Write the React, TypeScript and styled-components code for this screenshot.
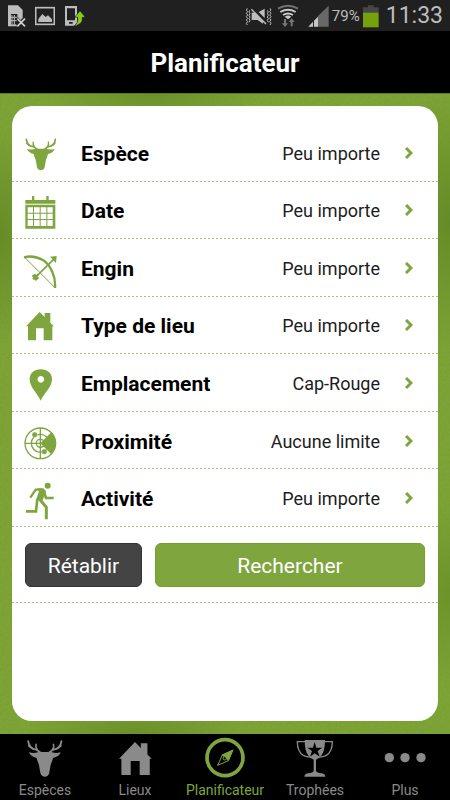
import React from "react";
import styled, { createGlobalStyle } from "styled-components";

const GREEN = "#7fa53f";
const GREY = "#8a8a8a";

const GlobalStyle = createGlobalStyle`
  *, *::before, *::after { box-sizing: border-box; }
  body { margin: 0; background: #000; font-family: Roboto, sans-serif; }
  button { font: inherit; cursor: pointer; }
`;

const Screen = styled.div`
  display: flex;
  flex-direction: column;
  min-height: 100vh;
`;

const StatusBar = styled.div`
  display: flex;
  align-items: center;
  justify-content: space-between;
  height: 31px;
  padding: 0 7px 0 6px;
  background: #202020;
  color: #bdbdbd;
`;

const StatusGroup = styled.div<{ $gap: number }>`
  display: flex;
  align-items: center;
  gap: ${(p) => p.$gap}px;
`;

const Percent = styled.span`
  font-size: 15px;
  line-height: 30px;
`;

const Clock = styled.time`
  padding-left: 4px;
  font-size: 23px;
  line-height: 30px;
`;

const Header = styled.header`
  display: flex;
  align-items: center;
  justify-content: center;
  height: 62px;
  padding-top: 2px;
  background: #000;
`;

const Title = styled.h1`
  margin: 0;
  color: #fff;
  font-size: 26px;
  font-weight: 700;
  line-height: 32px;
`;

const Main = styled.main`
  position: relative;
  display: flex;
  flex: 1;
  padding: 12px 12px 13px;
  border-top: 1px solid #587a25;
  background:
    radial-gradient(ellipse 110px 40px at 30% 100%, #68902f, transparent),
    radial-gradient(ellipse 110px 30px at 34% 0%, #68902f, transparent),
    radial-gradient(ellipse 60px 110px at 0% 22%, #628b2b, transparent),
    radial-gradient(ellipse 60px 130px at 100% 20%, #628b2b, transparent),
    radial-gradient(ellipse 60px 90px at 100% 78%, #6a9330, transparent),
    #7ca43c;
`;

const Texture = styled.svg`
  position: absolute;
  inset: 0;
  width: 100%;
  height: 100%;
  opacity: 0.2;
`;

const Card = styled.form`
  position: relative;
  flex: 1;
  padding-top: 18px;
  border-radius: 20px;
  background: #fff;
`;

const Rows = styled.div`
  display: grid;
  grid-auto-rows: 1fr;
  min-height: 403px;
`;

const dotted = `
  background-image: linear-gradient(90deg, #a9c383 50%, transparent 50%);
  background-size: 4px 1px;
  background-position: left bottom;
  background-repeat: repeat-x;
`;

const Row = styled.button.attrs({ type: "button" })`
  display: flex;
  align-items: center;
  width: 100%;
  padding: 0 25px 0 8px;
  border: 0;
  background-color: transparent;
  ${dotted}
  color: #000;
  text-align: left;
`;

const RowIcon = styled.svg`
  flex: none;
  width: 42px;
  height: 42px;
  color: ${GREEN};
`;

const RowLabel = styled.span`
  flex: 1;
  padding: 2px 0 0 19px;
  font-size: 21px;
  font-weight: 700;
  line-height: 26px;
`;

const RowValue = styled.span`
  padding: 2px 25px 0 0;
  color: #1c1c1c;
  font-size: 18px;
  line-height: 26px;
`;

const Chevron = styled.svg`
  flex: none;
  width: 8px;
  height: 12px;
  color: ${GREEN};
`;

const Actions = styled.div`
  display: flex;
  gap: 13px;
  padding: 16px 13px 16px;
  ${dotted}
`;

const ActionButton = styled.button<{ $primary?: boolean }>`
  flex: ${(p) => (p.$primary ? "7 1 0" : "3 1 0")};
  height: 44px;
  padding: 2px 0 0;
  border: 1px solid ${(p) => (p.$primary ? "#76a02c" : "#333")};
  border-radius: 6px;
  background: ${(p) => (p.$primary ? GREEN : "#444")};
  color: #fff;
  font-size: 21px;
`;

const TabBar = styled.nav`
  display: grid;
  grid-template-columns: repeat(5, 1fr);
  height: 66px;
  background: #000;
`;

const Tab = styled.a<{ $active?: boolean }>`
  display: flex;
  flex-direction: column;
  align-items: center;
  padding-top: 3px;
  color: ${(p) => (p.$active ? GREEN : GREY)};
  font-size: 14px;
  line-height: 18px;
  text-decoration: none;
`;

const TabIcon = styled.svg`
  width: 42px;
  height: 42px;
  margin-bottom: 2px;
`;

const Deer = () => (
  <g fill="currentColor">
    <path d="M82 88 Q99 92 110 86 Q123 89 137 86 Q149 92 165 88 Q162 99 145 103 Q143 112 139 120 L135 143 Q132 152 124 152 Q115 152 112 143 L108 120 Q104 112 102 103 Q86 99 82 88Z" />
    <g fill="none" stroke="currentColor" strokeLinecap="round">
      <path strokeWidth="5" d="M80 59 Q82 74 93 79 Q106 81 111 89 M167 59 Q165 74 154 79 Q141 81 136 89" />
      <path strokeWidth="4" d="M81 71 Q86 77 93 79 M101 67 Q98 75 104 82 M146 67 Q149 75 143 82 M166 71 Q161 77 154 79" />
    </g>
  </g>
);

const House = () => (
  <path
    fill="currentColor"
    d="M79 262 L120 219 L135 234 V222 H152 V251 L163 262 H158 V304 H132 V268 H109 V304 H85 V262Z"
  />
);

const CalendarIcon = () => (
  <g fill="currentColor">
    <path d="M77 242 H97 V230 H104 V242 H140 V230 H147 V242 H167 V253 H77Z" />
    <path
      fillRule="evenodd"
      d="M77 256 H167 V328 H77Z M84 264 V280 H100 V264Z M103 264 V280 H120 V264Z M123 264 V280 H140 V264Z M143 264 V280 H159 V264Z M84 283 V299 H100 V283Z M103 283 V299 H120 V283Z M123 283 V299 H140 V283Z M143 283 V299 H159 V283Z M84 302 V320 H100 V302Z M103 302 V320 H120 V302Z M123 302 V320 H140 V302Z M143 302 V320 H159 V302Z"
    />
  </g>
);

const Bow = () => (
  <g fill="none" stroke="currentColor">
    <path strokeWidth="3" d="M75 53 L165 143" />
    <path strokeWidth="7" d="M73 53 Q102 45 131 62 Q147 72 158 97 Q168 119 166 145" />
    <path strokeWidth="5" d="M101 119 L162 59" />
    <path fill="currentColor" stroke="none" d="M151 51 L171 49 L169 70Z M96 108 L106 102 L110 106 L113 102 L117 106 L114 111 L119 115 L108 124 L104 119 L97 118 L101 114Z" />
  </g>
);

const Pin = () => (
  <path
    fill="currentColor"
    fillRule="evenodd"
    d="M123 139 C114 118 90 99 90 75 C90 56 104 45 123 45 C143 45 157 56 157 75 C157 99 132 118 123 139Z M123 65 A10 10 0 1 0 124 65Z"
  />
);

const Radar = () => (
  <g fill="none" stroke="currentColor" strokeWidth="4">
    <circle cx="122" cy="266" r="46" />
    <circle cx="122" cy="266" r="27" />
    <circle cx="122" cy="266" r="12" />
    <path d="M76 266 H168 M122 220 V312" />
    <path fill="currentColor" stroke="none" d="M122 266 L155 233 A47 47 0 0 1 155 299Z" />
    <g fill="currentColor" stroke="#fff" strokeWidth="1">
      <circle cx="105" cy="240" r="8" />
      <circle cx="134" cy="291" r="8" />
    </g>
  </g>
);

const Runner = () => (
  <g fill="none" stroke="currentColor">
    <circle cx="144" cy="394" r="9" fill="currentColor" stroke="none" />
    <path strokeWidth="7" d="M92 430 L108 406 H126" />
    <path strokeWidth="8" d="M132 408 L139 431 H162" />
    <path fill="currentColor" stroke="none" d="M113 402 H131 L139 410 L129 438 L109 437 L118 411Z" />
    <path strokeWidth="8" d="M113 434 L109 471 H79" />
    <path strokeWidth="9" d="M120 435 L140 459 V495" />
  </g>
);

const Compass = () => (
  <g fill="none" stroke="currentColor">
    <circle cx="135" cy="84" r="54" strokeWidth="11" />
    <path strokeWidth="3" d="M158 62 L145 93 L113 107 L127 76Z" />
    <path fill="currentColor" stroke="none" d="M161 59 L146 94 L139 88 Q139 79 130 81 L125 75Z" />
    <circle cx="134" cy="86" r="5" strokeWidth="3" />
  </g>
);

const Trophy = () => (
  <g fill="currentColor">
    <path
      fillRule="evenodd"
      d="M240 150 H301 Q301 185 289 198 Q282 207 274 209 V243 Q277 249 290 250 Q301 251 302 260 H239 Q240 251 251 250 Q265 249 267 243 V209 Q259 207 252 198 Q240 185 240 150Z M270 156 L265 173 L248 173 L262 183 L256 200 L270 190 L285 200 L279 183 L293 173 L275 173Z"
    />
    <path fill="none" stroke="currentColor" strokeWidth="4" d="M242 155 H218 Q218 185 236 196 Q248 202 258 201 M299 155 H323 Q323 185 305 196 Q293 202 283 201" />
  </g>
);

const Dots = () => (
  <g fill="currentColor">
    <circle cx="491" cy="203" r="14" />
    <circle cx="538" cy="203" r="14" />
    <circle cx="586" cy="203" r="14" />
  </g>
);

const criteria = [
  { label: "Espèce", value: "Peu importe", box: "61 37 126 126", Icon: Deer },
  { label: "Date", value: "Peu importe", box: "61 209 126 126", Icon: CalendarIcon },
  { label: "Engin", value: "Peu importe", box: "61 22 126 126", Icon: Bow },
  { label: "Type de lieu", value: "Peu importe", box: "61 195 126 126", Icon: House },
  { label: "Emplacement", value: "Cap-Rouge", box: "61 23 126 126", Icon: Pin },
  { label: "Proximité", value: "Aucune limite", box: "61 196 126 126", Icon: Radar },
  { label: "Activité", value: "Peu importe", box: "61 368 126 126", Icon: Runner },
];

const tabs = [
  { label: "Espèces", box: "69 48 110 110", Icon: Deer },
  { label: "Lieux", box: "66 206 108 108", Icon: House },
  { label: "Planificateur", box: "72 22 126 126", Icon: Compass },
  { label: "Trophées", box: "208 141 126 126", Icon: Trophy },
  { label: "Plus", box: "475 141 126 126", Icon: Dots },
];

export default function App() {
  return (
    <>
      <GlobalStyle />
      <Screen>
        <StatusBar>
          <StatusGroup $gap={9}>
            <svg width="20" height="24" viewBox="18 12 60 72" aria-hidden="true">
              <path fill="#bdbdbd" d="M24 16 H54 L68 30 V54 L62 60 L52 50 V42 H33 V73 H48 L52 79 H24Z" />
              <path fill="none" stroke="#bdbdbd" strokeWidth="3" d="M36 45 V72 M43 45 V72 M33 52 H52 M33 62 H50" />
              <path fill="none" stroke="#d0d0d0" strokeWidth="5" d="M52 56 L75 79 M75 56 L52 79" />
            </svg>
            <svg width="20" height="20" viewBox="108 18 60 60" aria-hidden="true">
              <rect x="110" y="23" width="56" height="50" fill="none" stroke="#bdbdbd" strokeWidth="5" />
              <path fill="#bdbdbd" d="M118 66 V57 L130 42 L140 51 L147 46 L159 58 V66Z" />
            </svg>
            <svg width="22" height="22" viewBox="195 15 66 66" aria-hidden="true">
              <path fill="#bdbdbd" fillRule="evenodd" d="M198 18 H234 V77 H198Z M204 25 V61 H228 V25Z M210 66 V71 H221 V66Z" />
              <path fill="#8cc814" stroke="#202020" strokeWidth="2" d="M226 77 Q238 70 236 52 H227 L243 32 L259 52 H250 Q252 75 226 77Z" />
            </svg>
          </StatusGroup>
          <StatusGroup $gap={8}>
            <StatusGroup $gap={3}>
              <svg width="28" height="20" viewBox="58 18 84 60" aria-hidden="true">
                <path fill="none" stroke="#bdbdbd" strokeWidth="3" d="M65 25 L62 30 L66 35 L62 40 L66 45 L62 50 L66 55 L62 60 L66 65 L62 70 L65 75 M72 31 L70 36 L73 41 L70 46 L73 51 L70 56 L73 61 L70 67 M125 31 L128 36 L125 41 L128 46 L125 51 L128 56 L125 61 L128 67 M133 25 L136 30 L132 35 L136 40 L132 45 L136 50 L132 55 L136 60 L132 65 L136 70 L133 75" />
                <path fill="#bdbdbd" d="M78 38 H90 L112 64 V71 L96 60 H78Z M99 36 L117 26 V54Z" />
                <path stroke="#bdbdbd" strokeWidth="4" d="M77 28 L121 72" />
              </svg>
              <svg width="24" height="24" viewBox="151 12 72 72" aria-hidden="true">
                <path fill="none" stroke="#707070" strokeWidth="6" d="M157 26 Q187 8 217 26" />
                <path fill="none" stroke="#c8c8c8" strokeWidth="6" d="M164 36 Q187 22 210 36 M172 45 Q187 36 202 45" />
                <path fill="#c8c8c8" d="M177 50 Q187 43 197 50 L187 58Z" />
                <path fill="#777" d="M175 57 H181 V70 H187 L178 81 L169 70 H175Z M195 79 H201 V66 H207 L198 55 L189 66 H195Z" />
              </svg>
            </StatusGroup>
            <StatusGroup $gap={3}>
              <svg width="21" height="22" viewBox="246 18 63 66" aria-hidden="true">
                <path fill="#686868" d="M276 51 L308 20 V83 H276Z" />
                <path fill="#c8c8c8" d="M247 83 L261 68 V83Z M264 65 L276 53 V83 H264Z" />
              </svg>
              <Percent>79%</Percent>
              <svg width="16" height="24" viewBox="408 13 48 72" aria-hidden="true">
                <path fill="#464646" d="M423 17 H440 V23 H455 V40 H408 V23 H423Z" />
                <path fill="#76a00c" d="M408 39 H455 V83 H408Z" />
              </svg>
              <Clock>11:33</Clock>
            </StatusGroup>
          </StatusGroup>
        </StatusBar>

        <Header>
          <Title>Planificateur</Title>
        </Header>

        <Main>
          <Texture aria-hidden="true">
            <filter id="grain">
              <feTurbulence type="fractalNoise" baseFrequency="0.4" numOctaves="3" />
              <feColorMatrix values="0 0 0 0 0.2  0 0 0 0 0.3  0 0 0 0 0  3 0 0 0 -1" />
            </filter>
            <rect width="100%" height="100%" filter="url(#grain)" />
          </Texture>
          <Card onSubmit={(e) => e.preventDefault()}>
            <Rows>
              {criteria.map(({ label, value, box, Icon }) => (
                <Row key={label}>
                  <RowIcon viewBox={box} overflow="visible" aria-hidden="true">
                    <Icon />
                  </RowIcon>
                  <RowLabel>{label}</RowLabel>
                  <RowValue>{value}</RowValue>
                  <Chevron viewBox="0 0 8 12" aria-hidden="true">
                    <path fill="none" stroke="currentColor" strokeWidth="3" d="M1 1 L6 6 L1 11" />
                  </Chevron>
                </Row>
              ))}
            </Rows>
            <Actions>
              <ActionButton type="reset">Rétablir</ActionButton>
              <ActionButton type="submit" $primary>
                Rechercher
              </ActionButton>
            </Actions>
          </Card>
        </Main>

        <TabBar>
          {tabs.map(({ label, box, Icon }) => (
            <Tab
              key={label}
              href="#"
              $active={label === "Planificateur"}
              aria-current={label === "Planificateur" ? "page" : undefined}
            >
              <TabIcon viewBox={box} aria-hidden="true">
                <Icon />
              </TabIcon>
              {label}
            </Tab>
          ))}
        </TabBar>
      </Screen>
    </>
  );
}
